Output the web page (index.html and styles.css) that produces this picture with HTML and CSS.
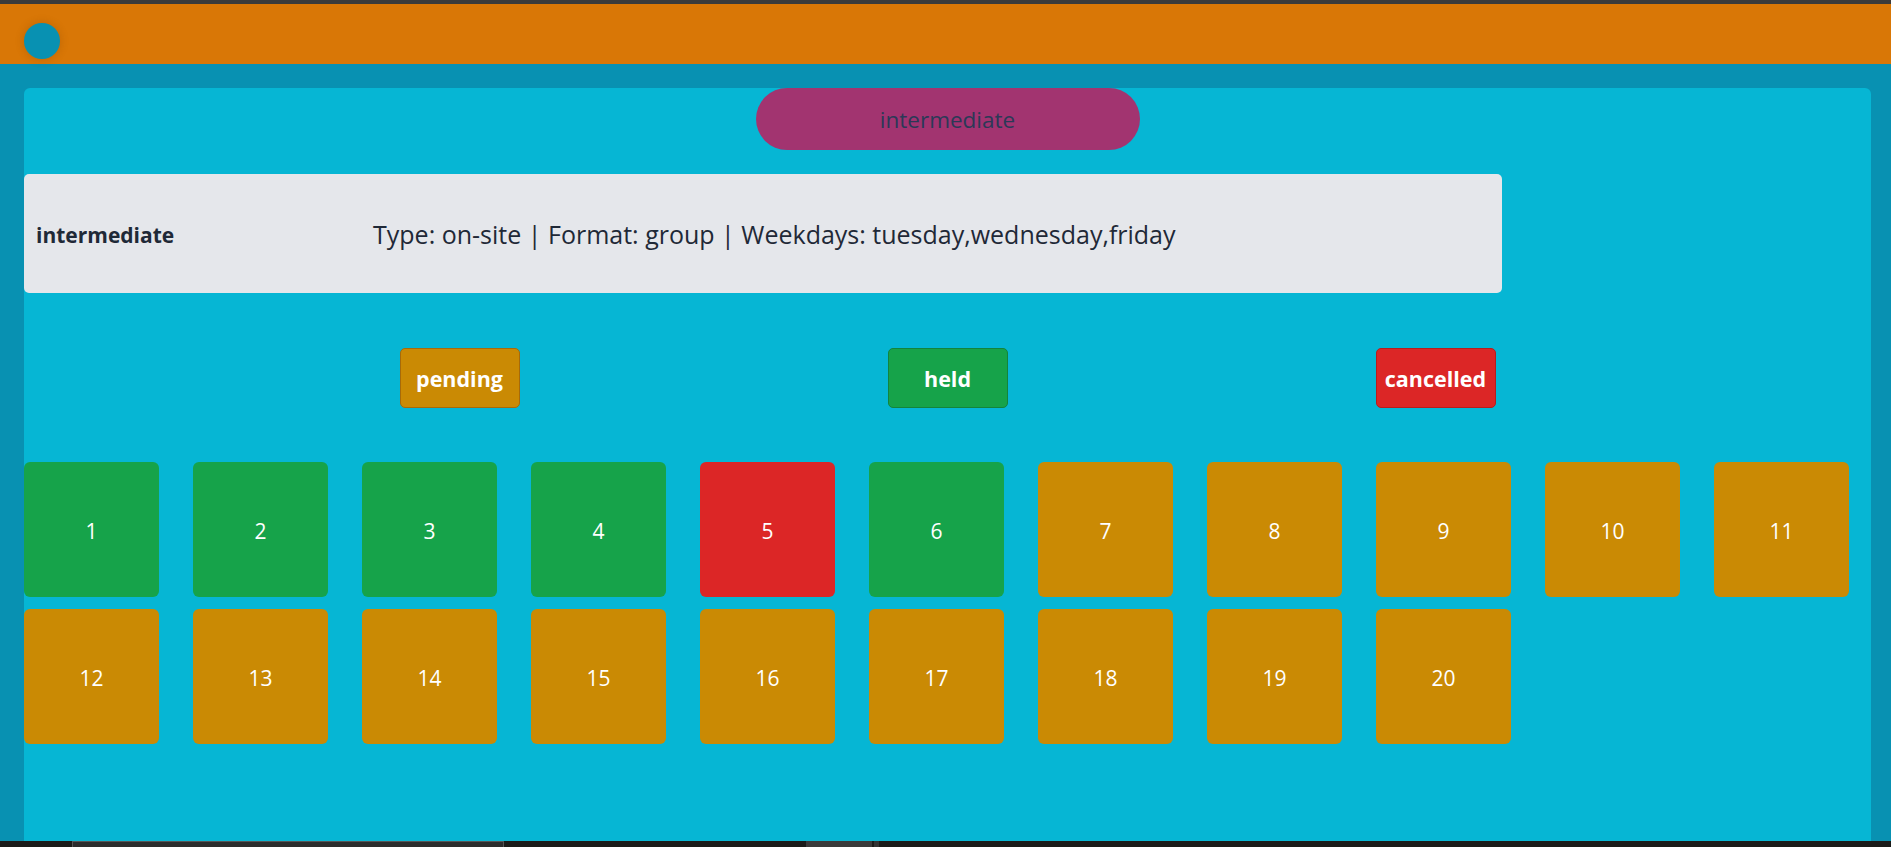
FILE: index.html
```html
<!DOCTYPE html>
<html lang="en">
<head>
<meta charset="utf-8">
<title>Course sessions</title>
<link rel="stylesheet" href="styles.css">
</head>
<body>
<header class="topbar">
  <span class="avatar"></span>
</header>
<main class="page">
  <section class="panel">
    <div class="level-row">
      <div class="level-pill">intermediate</div>
    </div>
    <div class="info-card">
      <div class="info-label">intermediate</div>
      <div class="info-text">Type: on-site | Format: group | Weekdays: tuesday,wednesday,friday</div>
    </div>
    <div class="legend">
      <span class="status pending">pending</span>
      <span class="status held">held</span>
      <span class="status cancelled">cancelled</span>
    </div>
    <div class="sessions">
      <div class="tile held">1</div>
      <div class="tile held">2</div>
      <div class="tile held">3</div>
      <div class="tile held">4</div>
      <div class="tile cancelled">5</div>
      <div class="tile held">6</div>
      <div class="tile pending">7</div>
      <div class="tile pending">8</div>
      <div class="tile pending">9</div>
      <div class="tile pending">10</div>
      <div class="tile pending">11</div>
      <div class="tile pending">12</div>
      <div class="tile pending">13</div>
      <div class="tile pending">14</div>
      <div class="tile pending">15</div>
      <div class="tile pending">16</div>
      <div class="tile pending">17</div>
      <div class="tile pending">18</div>
      <div class="tile pending">19</div>
      <div class="tile pending">20</div>
    </div>
  </section>
</main>
<div class="hscroll">
  <span class="hscroll-track"></span>
  <span class="hscroll-thumb"></span>
  <span class="hscroll-end"></span>
</div>
</body>
</html>
```
FILE: styles.css
```css
* {
  box-sizing: border-box;
}

html,
body {
  margin: 0;
  height: 100%;
  overflow: hidden;
}

body {
  background: #0891b2;
  font-family: "Open Sans", "Noto Sans", sans-serif;
}

.topbar {
  height: 64px;
  border-top: 4px solid #3b3b3b;
  background: #d97706;
  display: flex;
  align-items: flex-end;
  padding: 0 0 5px 24px;
}

.avatar {
  width: 36px;
  height: 36px;
  border-radius: 50%;
  background: #0891b2;
  box-shadow: 0 0 7px 2px rgba(120, 60, 0, 0.18);
}

.page {
  padding: 24px 20px 0 24px;
}

.panel {
  background: #06b6d4;
  border-radius: 6px 6px 0 0;
  min-height: 780px;
  display: flex;
  flex-direction: column;
}

.level-row {
  display: flex;
  justify-content: center;
}

.level-pill {
  width: 384px;
  height: 62px;
  border-radius: 31px;
  background: #a23470;
  color: #2b3957;
  font-size: 22.5px;
  display: flex;
  align-items: center;
  justify-content: center;
}

.info-card {
  margin-top: 24px;
  width: 80%;
  height: 119px;
  background: #e5e7eb;
  border-radius: 5px;
  display: flex;
  align-items: center;
}

.info-label {
  width: 349px;
  padding: 3px 0 0 12px;
  font-weight: 700;
  font-size: 21px;
  color: #1f2937;
}

.info-text {
  padding-top: 1px;
  font-size: 25px;
  color: #1f2937;
}

.legend {
  margin-top: 55px;
  display: flex;
  justify-content: center;
  gap: 368px;
}

.status {
  width: 120px;
  height: 60px;
  border-radius: 5px;
  border: 1px solid;
  color: #ffffff;
  font-weight: 700;
  font-size: 21.5px;
  display: flex;
  align-items: center;
  justify-content: center;
}

.status.pending {
  background: #ca8a04;
  border-color: #a86a08;
}

.status.held {
  background: #16a34a;
  border-color: #13843d;
}

.status.cancelled {
  background: #dc2626;
  border-color: #b91c1c;
}

.sessions {
  margin-top: 54px;
  display: grid;
  grid-template-columns: repeat(11, 135px);
  column-gap: 34px;
  row-gap: 12px;
}

.tile {
  height: 135px;
  padding-top: 2px;
  border-radius: 6px;
  color: #ffffff;
  font-size: 21px;
  display: flex;
  align-items: center;
  justify-content: center;
}

.tile.held {
  background: #16a34a;
}

.tile.cancelled {
  background: #dc2626;
}

.tile.pending {
  background: #ca8a04;
}

.hscroll {
  position: fixed;
  left: 0;
  right: 0;
  bottom: 0;
  height: 6px;
  background: #1b1b19;
}

.hscroll-track {
  position: absolute;
  left: 72px;
  width: 432px;
  top: 0;
  bottom: 0;
  background: #2c2c2c;
  border-top: 1px solid #555555;
  border-left: 1px solid #555555;
  border-right: 1px solid #555555;
}

.hscroll-thumb {
  position: absolute;
  left: 806px;
  width: 66px;
  top: 0;
  bottom: 0;
  background: #3a3a3a;
}

.hscroll-end {
  position: absolute;
  left: 874px;
  width: 5px;
  top: 0;
  bottom: 0;
  background: #333333;
}
```
